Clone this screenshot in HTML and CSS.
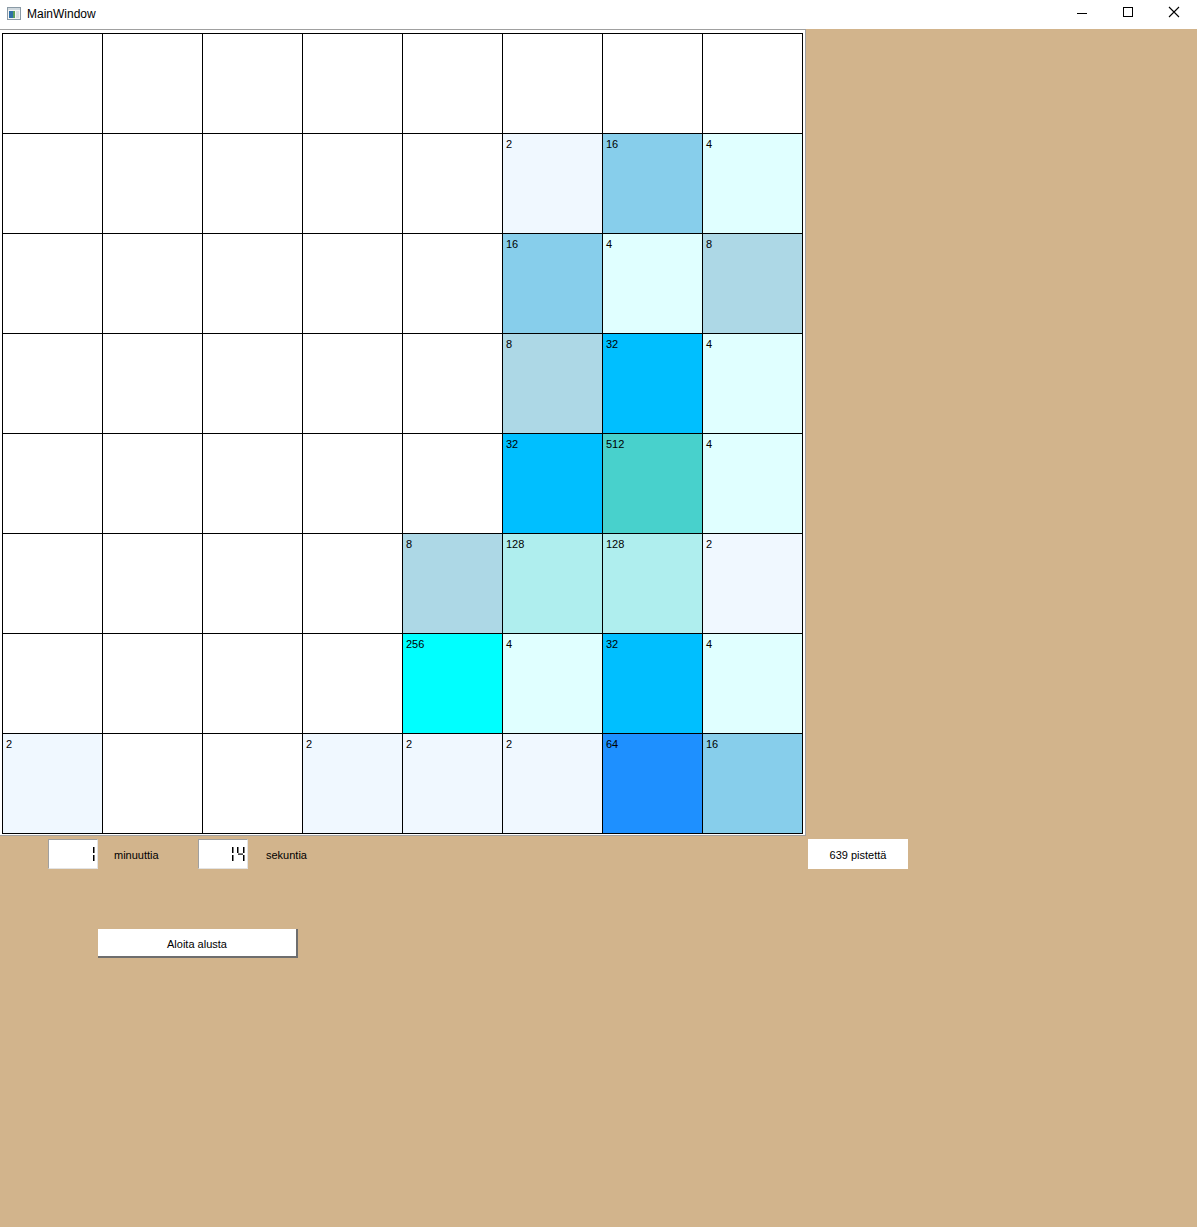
FILE: index.html
```html
<!DOCTYPE html>
<html>
<head>
<meta charset="utf-8">
<link rel="stylesheet" href="styles.css">
<title>MainWindow</title>
</head>
<body>
<div class="titlebar">
  <svg class="appicon" width="14" height="13" viewBox="0 0 14 13">
    <rect x="0.5" y="0.5" width="13" height="12" fill="#f4f4f4" stroke="#8a9aa6"/>
    <rect x="1" y="1" width="12" height="2" fill="#cfd8de"/>
    <rect x="2" y="4" width="4" height="7" fill="#2e6fa6"/>
    <rect x="6" y="4" width="2" height="7" fill="#5aa05a"/>
    <rect x="9" y="4" width="3" height="7" fill="#d8dee2"/>
  </svg>
  <span class="title">MainWindow</span>
  <div class="controls">
    <svg width="46" height="29" viewBox="0 0 46 29"><line x1="18" y1="13.5" x2="28" y2="13.5" stroke="#000" stroke-width="1"/></svg>
    <svg width="46" height="29" viewBox="0 0 46 29"><rect x="18.5" y="7.5" width="9" height="9" fill="none" stroke="#000" stroke-width="1"/></svg>
    <svg width="46" height="29" viewBox="0 0 46 29"><path d="M18 7 L28 17 M28 7 L18 17" stroke="#000" stroke-width="1.1"/></svg>
  </div>
</div>
<div class="frame">
  <div class="board">
    <div class="cell"></div><div class="cell"></div><div class="cell"></div><div class="cell"></div><div class="cell"></div><div class="cell"></div><div class="cell"></div><div class="cell"></div>
    <div class="cell"></div><div class="cell"></div><div class="cell"></div><div class="cell"></div><div class="cell"></div><div class="cell v2">2</div><div class="cell v16">16</div><div class="cell v4">4</div>
    <div class="cell"></div><div class="cell"></div><div class="cell"></div><div class="cell"></div><div class="cell"></div><div class="cell v16">16</div><div class="cell v4">4</div><div class="cell v8">8</div>
    <div class="cell"></div><div class="cell"></div><div class="cell"></div><div class="cell"></div><div class="cell"></div><div class="cell v8">8</div><div class="cell v32">32</div><div class="cell v4">4</div>
    <div class="cell"></div><div class="cell"></div><div class="cell"></div><div class="cell"></div><div class="cell"></div><div class="cell v32">32</div><div class="cell v512">512</div><div class="cell v4">4</div>
    <div class="cell"></div><div class="cell"></div><div class="cell"></div><div class="cell"></div><div class="cell v8">8</div><div class="cell v128">128</div><div class="cell v128">128</div><div class="cell v2">2</div>
    <div class="cell"></div><div class="cell"></div><div class="cell"></div><div class="cell"></div><div class="cell v256">256</div><div class="cell v4">4</div><div class="cell v32">32</div><div class="cell v4">4</div>
    <div class="cell v2">2</div><div class="cell"></div><div class="cell"></div><div class="cell v2">2</div><div class="cell v2">2</div><div class="cell v2">2</div><div class="cell v64">64</div><div class="cell v16">16</div>
  </div>
</div>
<div class="status">
  <div class="lcd">
    <svg width="48" height="28" viewBox="0 0 48 28">
      <rect x="44" y="7" width="1.5" height="6" fill="#000"/>
      <rect x="44" y="15" width="1.5" height="6" fill="#000"/>
    </svg>
  </div>
  <div class="label lbl1">minuuttia</div>
  <div class="lcd">
    <svg width="48" height="28" viewBox="0 0 48 28">
      <rect x="33" y="7" width="1.5" height="6" fill="#000"/>
      <rect x="33" y="15" width="1.5" height="6" fill="#000"/>
      <rect x="38" y="7" width="1.5" height="6" fill="#000"/>
      <rect x="39" y="13.5" width="5" height="1.2" fill="#000"/>
      <rect x="44" y="7" width="1.5" height="6" fill="#000"/>
      <rect x="44" y="15" width="1.5" height="6" fill="#000"/>
    </svg>
  </div>
  <div class="label lbl2">sekuntia</div>
  <div class="score">639 pistettä</div>
</div>
<button class="restart">Aloita alusta</button>
</body>
</html>
```
FILE: styles.css
```css
html, body {
  margin: 0;
  padding: 0;
}
body {
  width: 1197px;
  height: 1227px;
  background: #d2b48c;
  font-family: "Liberation Sans", Arial, sans-serif;
  overflow: hidden;
}
.titlebar {
  height: 29px;
  background: #ffffff;
  display: flex;
  align-items: center;
}
.appicon {
  margin-left: 7px;
  margin-top: -2px;
}
.title {
  margin-left: 6px;
  font-size: 12px;
  color: #000;
  margin-top: -2px;
}
.controls {
  margin-left: auto;
  display: flex;
  align-self: flex-start;
}
.controls svg {
  display: block;
}
.frame {
  width: 803px;
  background: #ffffff;
  border-top: 1px solid #a0a0a0;
  border-right: 1px solid #a0a0a0;
  border-bottom: 1px solid #a0a0a0;
  padding: 3px 0 1px 2px;
}
.board {
  display: grid;
  grid-template-columns: repeat(8, 100px);
  grid-auto-rows: 100px;
  width: 800px;
  border-left: 1px solid #000;
  border-top: 1px solid #000;
}
.cell {
  border-right: 1px solid #000;
  border-bottom: 1px solid #000;
  background: #ffffff;
  font-size: 11px;
  line-height: 13px;
  padding: 4px 0 0 3px;
  color: #000;
}
.v2 { background: #f0f8ff; }
.v4 { background: #e0ffff; }
.v8 { background: #add8e6; }
.v16 { background: #87ceeb; }
.v32 { background: #00bfff; }
.v64 { background: #1e90ff; }
.v128 { background: #afeeee; }
.v256 { background: #00ffff; }
.v512 { background: #48d1cc; }
.status {
  display: flex;
  align-items: center;
  margin-top: 3px;
  padding-left: 48px;
  height: 30px;
}
.lcd {
  width: 48px;
  height: 28px;
  background: #fff;
  border-top: 1px solid #a0a0a0;
  border-left: 1px solid #a0a0a0;
  border-right: 1px solid #e3e3e3;
  border-bottom: 1px solid #e3e3e3;
}
.lcd svg {
  display: block;
}
.label {
  font-size: 11px;
  color: #000;
  box-sizing: border-box;
  padding-top: 2px;
}
.lbl1 {
  width: 100px;
  padding-left: 16px;
}
.lbl2 {
  width: 560px;
  padding-left: 18px;
}
.score {
  width: 100px;
  height: 30px;
  background: #fff;
  font-size: 11px;
  display: flex;
  align-items: center;
  justify-content: center;
  padding-top: 2px;
  box-sizing: border-box;
}
.restart {
  display: block;
  margin: 60px 0 0 98px;
  width: 200px;
  height: 29px;
  padding: 3px 0 0 0;
  background: #fff;
  border: none;
  border-right: 2px solid #6e6e6e;
  border-bottom: 2px solid #6e6e6e;
  font-family: "Liberation Sans", Arial, sans-serif;
  font-size: 11px;
  color: #000;
  box-sizing: border-box;
}
```
